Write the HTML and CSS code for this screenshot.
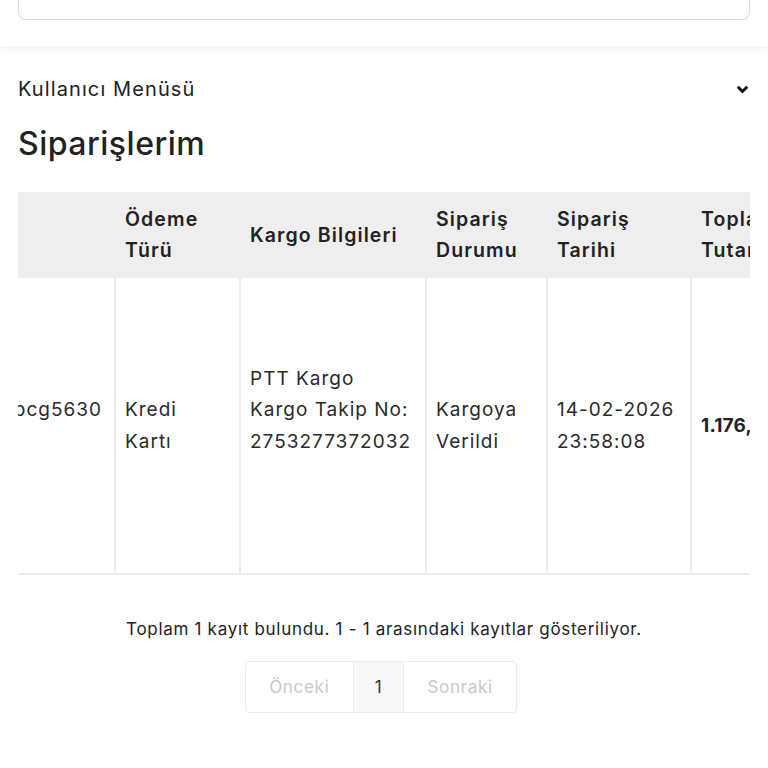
FILE: index.html
```html
<!DOCTYPE html>
<html lang="tr">
<head>
<meta charset="utf-8">
<title>Siparişlerim</title>
<link rel="stylesheet" href="styles.css">
</head>
<body>
<header class="top">
  <div class="search-box"></div>
</header>
<main class="page">
  <div class="menu-toggle">
    <span>Kullanıcı Menüsü</span>
    <svg class="chev" width="13" height="9" viewBox="0 0 13 9"><polyline points="1.8,1.8 6.5,6.5 11.2,1.8" fill="none" stroke="#111" stroke-width="3"/></svg>
  </div>
  <h1 class="title">Siparişlerim</h1>
  <div class="table-wrap">
    <div class="grid">
      <div class="th first">Sipariş No</div>
      <div class="th">Ödeme<br>Türü</div>
      <div class="th">Kargo Bilgileri</div>
      <div class="th">Sipariş<br>Durumu</div>
      <div class="th">Sipariş<br>Tarihi</div>
      <div class="th">Toplam<br>Tutar</div>

      <div class="td first"><span class="code">2502obcg5630<br>&nbsp;</span></div>
      <div class="td">Kredi<br>Kartı</div>
      <div class="td">PTT Kargo<br>Kargo Takip No:<br>2753277372032<br>&nbsp;</div>
      <div class="td">Kargoya<br>Verildi</div>
      <div class="td">14-02-2026<br>23:58:08</div>
      <div class="td"><b>1.176,00 TL</b></div>
    </div>
  </div>
  <p class="info">Toplam 1 kayıt bulundu. 1 - 1 arasındaki kayıtlar gösteriliyor.</p>
  <div class="pager-row">
    <nav class="pager">
      <span class="pg disabled prev">Önceki</span>
      <span class="pg current">1</span>
      <span class="pg disabled next">Sonraki</span>
    </nav>
  </div>
</main>
</body>
</html>
```

FILE: styles.css
```css
* { box-sizing: border-box; }
html, body { margin: 0; padding: 0; background: #fff; }
body {
  font-family: Inter, "Open Sans", sans-serif;
  color: #222;
  width: 768px;
  overflow: hidden;
}
.top {
  padding: 0 18px 26px;
  background: #fff;
  box-shadow: 0 3px 6px rgba(0,0,0,0.06);
  position: relative;
  z-index: 1;
}
.search-box {
  height: 20px;
  border: 1.5px solid #dcdcdc;
  border-top: none;
  border-radius: 0 0 8px 8px;
}
.page { padding: 0 18px; }
.menu-toggle {
  display: flex;
  justify-content: space-between;
  align-items: center;
  margin-top: 29px;
  height: 28px;
  font-size: 20px;
  letter-spacing: 1.1px;
  color: #222;
}
.chev { margin-right: 1px; }
.title {
  margin: 21px 0 0;
  font-size: 32px;
  line-height: 40px;
  font-weight: 500;
  letter-spacing: 0.5px;
  color: #222;
}
.table-wrap {
  margin-top: 28px;
  overflow: hidden;
}
.grid {
  display: grid;
  grid-template-columns: 236px 125px 186px 121px 144px 120px;
  margin-left: -140px;
  width: 932px;
}
.th, .td {
  display: flex;
  align-items: center;
  padding: 0 8px 0 9px;
  border-left: 2px solid #ececec;
  white-space: nowrap;
  overflow: hidden;
}
.th {
  height: 86px;
  background: #eeeeee;
  border-left-color: #eeeeee;
  font-size: 19.5px;
  font-weight: 600;
  letter-spacing: 1.1px;
  line-height: 31px;
  color: #222;
}
.td {
  height: 297px;
  border-bottom: 2px solid #ececec;
  font-size: 19px;
  letter-spacing: 1px;
  line-height: 31.5px;
  color: #2a2a2a;
}
.first { border-left: none; }
.td.first { justify-content: flex-end; padding-right: 12px; }
.td b { font-weight: 700; color: #222; letter-spacing: 0.2px; }
.info {
  margin: 42px 0 0;
  text-align: center;
  font-size: 17px;
  letter-spacing: 0.7px;
  line-height: 24px;
  color: #222;
}
.pager-row {
  display: flex;
  justify-content: center;
  padding-right: 6px;
  margin-top: 20px;
}
.pager {
  display: flex;
  width: 272px;
  height: 52px;
  border: 1px solid #ececec;
  border-radius: 4px;
  overflow: hidden;
}
.pg {
  display: flex;
  align-items: center;
  justify-content: center;
  font-size: 17px;
  letter-spacing: 0.7px;
}
.prev { width: 107px; }
.next { width: 112px; }
.current {
  width: 52px;
  background: #f8f8f8;
  border-left: 1px solid #ececec;
  border-right: 1px solid #ececec;
  color: #333;
}
.disabled { color: #c9c9c9; }
```
